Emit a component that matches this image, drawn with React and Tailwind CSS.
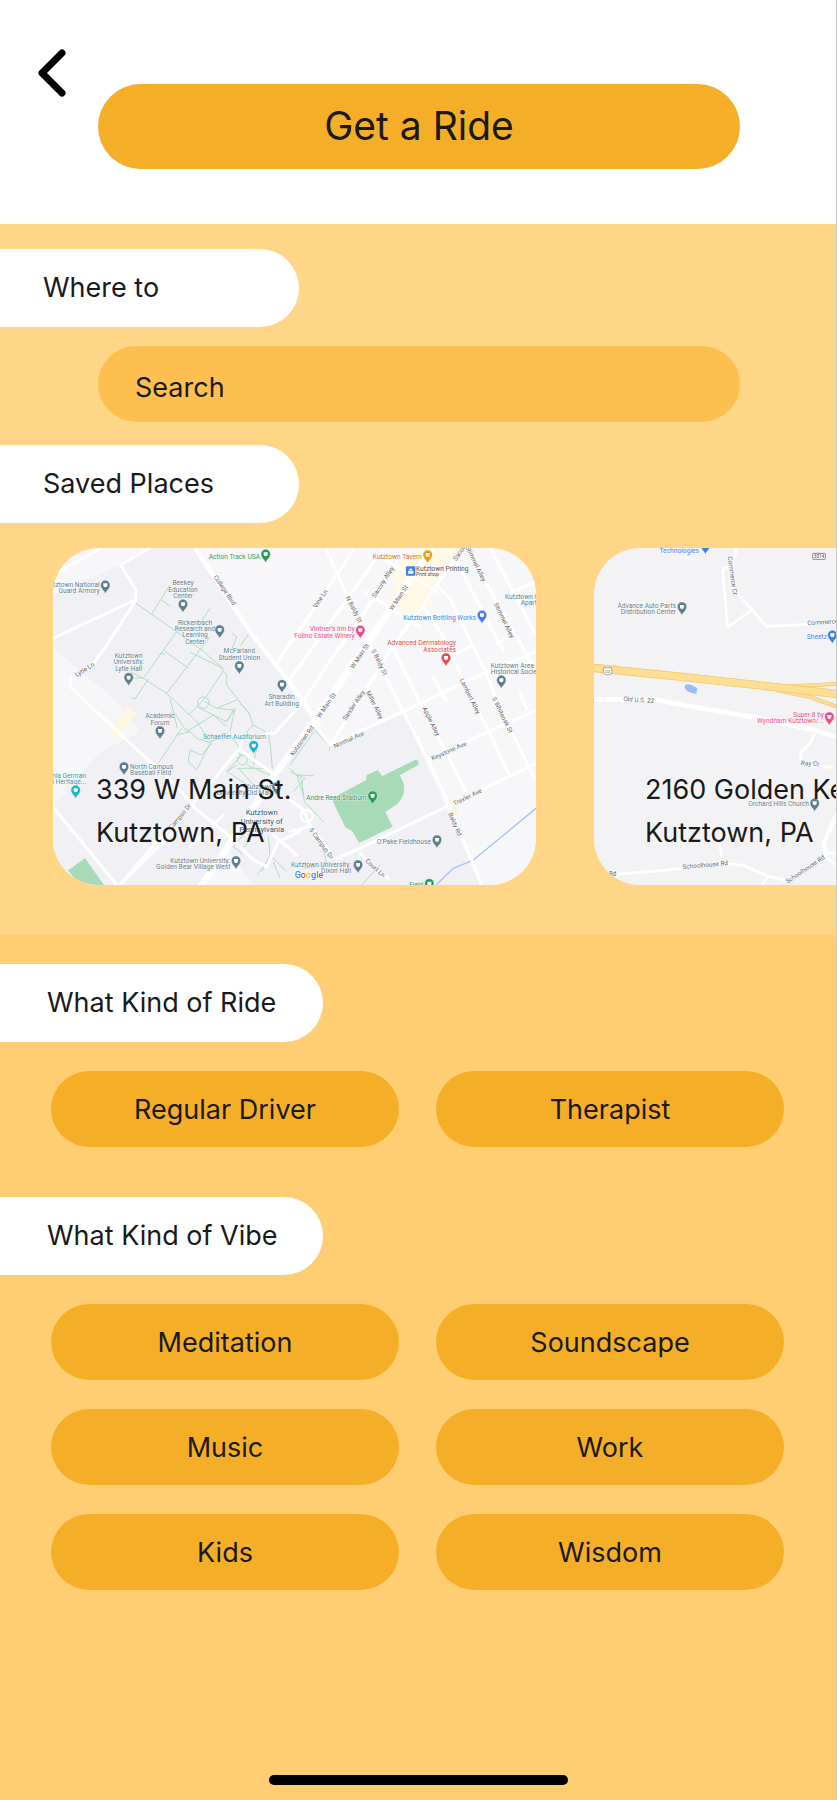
import React, { useState } from 'react';

const PILL = 'h-[76px] rounded-full bg-[#f5ae27] pt-[2px] text-[27px] leading-[34px] text-[#1a1a1a]';

const rideTypes = ['Regular Driver', 'Therapist'];
const vibes = ['Meditation', 'Soundscape', 'Music', 'Work', 'Kids', 'Wisdom'];

const SLATE = '#5f7d8c';
const BLUE = '#3f7ee8';
const PINK = '#e84a86';
const TEAL = '#12b5cb';
const GREEN = '#1e9e54';

// Each label is [x, y, anchor, colour, lines]
const campusLabels = [
    [660, 71, 'end', GREEN, ['Action Track USA']],
    [179, 155, 'end', SLATE, ['Kutztown National', 'Guard Armory']],
    [429, 151, 'middle', SLATE, ['Beekey', 'Education', 'Center']],
    [465, 269, 'middle', SLATE, ['Rickenbach', 'Research and', 'Learning', 'Center']],
    [598, 355, 'middle', SLATE, ['McFarland', 'Student Union']],
    [266, 369, 'middle', SLATE, ['Kutztown', 'University:', 'Lytle Hall']],
    [725, 493, 'middle', SLATE, ['Sharadin', 'Art Building']],
    [360, 550, 'middle', SLATE, ['Academic', 'Forum']],
    [583, 613, 'middle', '#3b9aab', ['Schaeffer Auditorium']],
    [138, 728, 'end', '#3b9aab', ['Pennsylvania German', 'Cultural Heritage...']],
    [270, 701, 'start', SLATE, ['North Campus', 'Baseball Field']],
    [571, 983, 'end', SLATE, ['Kutztown University:', 'Golden Bear Village West']],
    [700, 762, 'end', SLATE, ['Kutztown', 'University Old Main']],
    [1146, 73, 'end', '#d9730d', ['Kutztown Tavern']],
    [1128, 107, 'start', '#4b5158', ['Kutztown Printing']],
    [1308, 254, 'end', BLUE, ['Kutztown Bottling Works']],
    [944, 289, 'end', PINK, ["Vintner's Inn by", 'Folino Estate Winery']],
    [1248, 331, 'end', '#dc4a4a', ['Advanced Dermatology', 'Associates']],
    [1395, 192, 'start', SLATE, ['Kutztown Grand']],
    [1442, 211, 'start', SLATE, ['Apartments']],
    [1352, 399, 'start', SLATE, ['Kutztown Area', 'Historical Society']],
    [980, 794, 'end', '#3c8a5c', ['Andre Reed Stadium']],
    [1173, 927, 'end', SLATE, ["O'Pake Fieldhouse"]],
    [933, 995, 'end', SLATE, ['Kutztown University:', 'Dixon Hall']],
    [1150, 1056, 'end', GREEN, ['Field']],
];

const campusPins = [
    [677, 60, GREEN], [196, 153, SLATE], [429, 210, SLATE], [539, 287, SLATE],
    [598, 395, SLATE], [266, 430, SLATE], [726, 451, SLATE], [360, 590, SLATE],
    [641, 634, TEAL], [107, 768, TEAL], [252, 698, SLATE], [588, 980, SLATE], [710, 758, SLATE],
    [1163, 62, '#f29913'], [1326, 243, BLUE], [961, 288, PINK],
    [1218, 371, '#e2504b'], [1384, 438, SLATE], [998, 785, GREEN], [1191, 917, SLATE],
    [954, 992, SLATE], [1168, 1048, GREEN],
];

// Each street name is [x, y, angle, text]
const campusStreets = [
    [553, 166, 56, 'College Blvd'], [135, 405, -32, 'Lytle Ln'], [421, 845, -50, 'Campus Dr'],
    [842, 192, -56, 'Vine Ln'], [941, 224, 63, 'N Baldy St'], [1030, 142, -57, 'Sacony Alley'],
    [1077, 189, -56, 'W Main St'], [960, 364, -56, 'W Main St'], [860, 512, -56, 'W Main St'],
    [1017, 382, 64, 'S Baldy St'], [1306, 86, 64, 'Stimmel Alley'], [1391, 256, 64, 'Stimmel Alley'],
    [1289, 484, 64, 'Lambert Alley'], [1003, 510, 64, 'Miller Alley'], [942, 512, -56, 'Sander Alley'],
    [1172, 560, 64, 'Apple Alley'], [1386, 540, 64, 'S Whiteoak St'], [787, 618, -54, 'Kutztown Rd'],
    [927, 615, -24, 'Normal Ave'], [1227, 649, -24, 'Keystone Ave'], [1283, 787, -26, 'Trexler Ave'],
    [1244, 868, 66, 'Baldy Rd'], [843, 926, 54, 'S Campus Dr'], [1005, 1000, 42, 'Court Ln'],
    [1262, 50, -56, 'Sacony'],
];

const goldenLabels = [
    [357, 48, 'end', BLUE, ['Technologies']],
    [288, 213, 'end', SLATE, ['Advance Auto Parts', 'Distribution Center']],
    [741, 306, 'end', BLUE, ['Sheetz']],
    [732, 540, 'end', PINK, ['Super 8 by', 'Wyndham Kutztown/...']],
    [687, 808, 'end', SLATE, ['Orchard Hills Church']],
];

const goldenPins = [
    [376, 29, BLUE], [306, 212, SLATE], [757, 297, BLUE], [748, 542, PINK], [704, 801, SLATE],
];

const goldenStreets = [
    [456, 116, 82, 'Commerce Ct'], [740, 256, -4, 'Commerce Ct'], [176, 490, 4, 'Old U.S. 22'],
    [690, 681, 4, 'Ray Ct'], [376, 985, -5, 'Schoolhouse Rd'], [676, 998, -34, 'Schoolhouse Rd'],
    [98, 1013, 0, 'Rd'],
];

const Pin = ({ x, y, color }) => (
    <g transform={`translate(${x} ${y})`}>
        <path d="M0 23C-3 13-14 9-14-3a14 14 0 0 1 28 0C14 9 3 13 0 23Z" fill={color} stroke="#fff" strokeWidth="1" />
        <path d="M-6-8h12v6a6 6 0 0 1-12 0Z" fill="#fff" />
    </g>
);

const MapText = ({ labels, pins, streets }) => (
    <g fontFamily="Roboto, sans-serif">
        {streets.map(([x, y, angle, text]) => (
            <text key={`${x}-${y}`} transform={`translate(${x} ${y}) rotate(${angle})`} textAnchor="middle" dominantBaseline="middle" fontSize="19" fill="#5f6368" stroke="#fff" strokeWidth="2" paintOrder="stroke">
                {text}
            </text>
        ))}
        {labels.map(([x, y, anchor, color, lines]) =>
            lines.map((line, i) => (
                <text key={`${x}-${y}-${i}`} x={x} y={y + i * 19} textAnchor={anchor} fontSize="20" fill={color} stroke="#fff" strokeWidth="2" paintOrder="stroke">
                    {line}
                </text>
            ))
        )}
        {pins.map(([x, y, color]) => (
            <Pin key={`${x}-${y}`} x={x} y={y} color={color} />
        ))}
    </g>
);

const CampusMap = () => (
    <svg viewBox="39 39 1449 1011" preserveAspectRatio="xMidYMid slice" className="absolute inset-0 h-full w-full" aria-hidden="true">
        <rect x="39" y="39" width="1449" height="1011" fill="#f7f7f9" />
        <path d="M39 180 240 90 330 39H465L780 505 870 630 1090 530 1320 1050H640L560 940 470 1050H39V815L180 650 300 590 220 490 39 340Z" fill="#f1f1f5" />
        <path d="M1145 39h110l-95 135 25 15-55 75-90-55 30-70-38-25Z" fill="#fef9e7" />
        <path d="M262 520 290 535 232 612 205 592Z" fill="#fdf7df" />
        <path d="M84 1006 135 970 192 1050H120Z" fill="#a9dab8" />
        <path d="M881 805q-6-12 8-22l90-48v-14l34-16 14 18 100-49q10 0 9 15l-57 32c24 36 14 66-10 88l-33 22 22 44-100 49-22-36-20-11Z" fill="#a9dab8" />
        <path d="M1222 792 1237 788 1258 840 1243 848Z" fill="#fdf3dc" />
        <path d="M1188 1050 1240 1000 1300 975 1488 820" fill="none" stroke="#a3c0f7" strokeWidth="4" />

        {/* footpaths */}
        <g fill="none" stroke="#b2dcc1" strokeWidth="3">
            <path d="M285 203 410 290 485 345 550 400M390 150 335 237M365 195 390 213M510 220 480 265M410 290 310 430 380 475M510 305 380 475M370 345 445 400M360 355 375 358M450 352 540 395 560 420 560 450 595 495 630 540M630 290 600 335M575 295 590 305 575 345M552 405 495 490 445 540M310 430 270 410M325 432 285 492 274 487M390 490 412 580M270 430 310 428M380 475 470 560 510 620" />
            <circle cx="490" cy="503" r="17" />
            <path d="M495 500 530 520 580 525 560 560 500 530 470 515M530 520 590 495M560 560 585 520 570 590M405 535 440 590 520 540 560 575M425 580 355 685M440 580 470 610 515 625 485 660 450 645 445 680 470 705 510 625M450 590 410 600M510 620 570 600 600 640M590 650 610 665M595 700 650 760M600 505 625 530 640 570 620 590 650 640 640 690M640 570 685 595 692 640 697 700M605 660 560 710 640 760" />
            <circle cx="607" cy="675" r="15" />
            <path d="M590 700 680 700 710 725 650 800M620 690 690 720M560 710 590 690M640 870 625 920 605 945M685 905 690 960 665 1010M690 960 740 1010M610 900 580 935 608 958M685 975 650 1020M700 980 720 1030M825 585 870 635 868 648M823 588 750 690M750 700 785 735 790 780 770 720 820 722M750 710 795 730 760 770M785 735 793 800 850 860M848 935 860 985M1020 990 965 1050M790 1000 860 990" />
        </g>

        {/* streets */}
        <g fill="none" stroke="#fff" strokeWidth="9" strokeLinejoin="round" strokeLinecap="round">
            <path d="M39 120 185 39M39 310 285 195M330 39 242 90 288 165 285 200 200 330 150 400 98 425Q85 440 95 460L180 540 340 690 430 775 465 820 570 905 640 975 680 995 715 920 780 890" />
            <path d="M39 815 230 1050M240 1050 350 920 455 810 600 640 612 600M600 645 705 720M680 595 705 595 785 505M530 1000 570 930M450 935 550 840M240 1050 410 880M700 900 770 960" />
            <path d="M710 385 890 120 940 45M745 440 1030 40M785 505 865 385 975 230 1090 50M860 45 930 200 985 320 1090 530 1165 675 1230 815 1325 1050M1060 340 1150 525 1210 635 1280 775M1150 212 1200 290 1240 370 1310 520 1350 595 1405 715M1190 150 1230 190 1335 410 1390 540 1488 740M1230 50 1270 120 1375 320 1390 345M1280 39 1450 340 1488 410M1350 39 1488 300M980 460 1030 560M1180 425 1220 500M1440 475 1460 520" />
            <path d="M870 630 980 460 1060 330 1150 212 1190 150 1270 39M825 570 870 630 1090 530 1335 413 1488 350M1165 675 1280 620 1488 525M890 970 960 940 1230 810 1488 685M1220 370 1290 335M1370 325 1420 300M1430 165 1488 140M975 170 1140 275M1030 70 1190 170M750 795 790 825 810 870 880 965 905 970M750 890 810 875M960 955 1045 1030" />
            <circle cx="800" cy="843" r="18" strokeWidth="6" />
        </g>
        <path d="M465 39 630 290 750 445 825 550 840 575" fill="none" stroke="#fff" strokeWidth="13" />
        <path d="M480 1060 570 925 700 725 825 555 985 320 1175 39" fill="none" stroke="#fff" strokeWidth="20" />

        <MapText labels={campusLabels} pins={campusPins} streets={campusStreets} />
        <rect x="1098" y="94" width="28" height="28" rx="3" fill={BLUE} />
        <path d="M1104 107h16v9h-16Zm4-1v-5h8v5" fill="#fff" />
        <g fontFamily="Roboto, sans-serif" textAnchor="middle">
            <text x="1128" y="123" textAnchor="start" fontSize="15" fill="#4b5158">Print shop</text>
            <g fontSize="23" fill="#1d5b70" stroke="#fff" strokeWidth="2" paintOrder="stroke">
                <text x="665" y="840">Kutztown</text>
                <text x="665" y="866">University of</text>
                <text x="665" y="892">Pennsylvania</text>
            </g>
            <text x="807" y="1030" fontSize="27" fontWeight="500" stroke="#fff" strokeWidth="3" paintOrder="stroke">
                <tspan fill="#4285f4">G</tspan>
                <tspan fill="#ea4335">o</tspan>
                <tspan fill="#fbbc05">o</tspan>
                <tspan fill="#4285f4">g</tspan>
                <tspan fill="#34a853">l</tspan>
                <tspan fill="#ea4335">e</tspan>
            </text>
        </g>
    </svg>
);

const GoldenMap = () => (
    <svg viewBox="42 33 1449 1011" preserveAspectRatio="xMidYMid slice" className="absolute inset-0 h-full w-full" aria-hidden="true">
        <rect x="42" y="33" width="1449" height="1011" fill="#f3f3f5" />
        <g fill="none" stroke="#fff" strokeWidth="8" strokeLinejoin="round">
            <path d="M470 33 455 100 460 155 560 268 690 262 800 252M455 90 432 92 428 105 443 270 515 220" />
            <path d="M42 487H220L400 520 560 548 700 578 800 610" strokeWidth="14" />
            <path d="M703 592 690 620Q650 650 665 670L700 685 760 692M105 1012 250 1000 430 978 490 985 565 1018 620 1030 680 990 735 958 800 1010M430 978 418 920M565 1018 545 1044" />
            <path d="M800 770 730 920 740 955M730 948H800" strokeWidth="12" />
        </g>
        <g fill="none">
            <path d="M590 450 800 439M590 460 690 480 800 520" stroke="#f3c66e" strokeWidth="12" />
            <path d="M590 450 800 439M590 460 690 480 800 520" stroke="#fddf93" strokeWidth="8" />
            <path d="M42 393 300 419 600 452 800 474" stroke="#f3c66e" strokeWidth="25" />
            <path d="M42 393 300 419 600 452 800 474" stroke="#fddf93" strokeWidth="20" />
        </g>
        <path d="M314 446q10-7 20-3l18 11-3 17q-30-4-35-18Z" fill="#9bbcfb" />
        <path d="M72 391q11 4 22 0 4 12 0 20-11 5-22 0-4-10 0-20Z" fill="#fff" stroke="#888" strokeWidth="2" />
        <rect x="698" y="49" width="38" height="18" rx="2" fill="#fff" stroke="#555" strokeWidth="2" />
        <g fontFamily="Roboto, sans-serif" textAnchor="middle" fill="#444">
            <text x="83" y="407" fontSize="13">22</text>
            <text x="717" y="63" fontSize="14">3014</text>
        </g>
        <MapText labels={goldenLabels} pins={goldenPins} streets={goldenStreets} />
    </svg>
);

const places = [
    { street: '339 W Main St.', city: 'Kutztown, PA', Map: CampusMap, pad: 'pl-[43px]' },
    { street: '2160 Golden Key Rd', city: 'Kutztown, PA', Map: GoldenMap, pad: 'pl-[51px]' },
];

const SectionLabel = ({ as: Tag = 'h2', wide, children, ...rest }) => (
    <Tag
        className={`flex h-[78px] items-center rounded-r-full bg-white text-[27px] leading-[34px] ${wide ? 'w-[323px] pl-[47px]' : 'w-[299px] pl-[43px]'}`}
        {...rest}
    >
        {children}
    </Tag>
);

const Options = ({ items, selected, onSelect }) => (
    <div className="grid grid-cols-2 gap-x-[37px] gap-y-[29px] pt-[29px] pr-[52px] pl-[51px]">
        {items.map((item) => (
            <button key={item} type="button" aria-pressed={selected === item} onClick={() => onSelect(item)} className={PILL}>
                {item}
            </button>
        ))}
    </div>
);

const App = () => {
    const [search, setSearch] = useState('');
    const [ride, setRide] = useState(null);
    const [vibe, setVibe] = useState(null);

    return (
        <div className="flex min-h-screen flex-col border-r border-[#c9c9c9] bg-[#ffce73] font-['Inter',sans-serif] text-[#1a1a1a]">
            <header className="relative bg-white pt-[84px] pr-24 pb-[55px] pl-[98px]">
                <button type="button" aria-label="Back" className="absolute top-[48px] left-[36px]">
                    <svg width="32" height="50" viewBox="0 0 32 50" fill="none" stroke="#000" strokeWidth="7" strokeLinecap="round" strokeLinejoin="round">
                        <path d="M26 5 6 25l20 20" />
                    </svg>
                </button>
                <h1 className="flex h-[85px] items-center justify-center rounded-full bg-[#f5ae27] text-[39px]">
                    Get a Ride
                </h1>
            </header>

            <section className="bg-[#ffd588] pt-[25px] pb-[50px]">
                <SectionLabel as="label" htmlFor="search">Where to</SectionLabel>
                <div className="pt-[19px] pr-24 pb-[23px] pl-[98px]">
                    <input
                        id="search"
                        type="text"
                        placeholder="Search"
                        value={search}
                        onChange={(e) => setSearch(e.target.value)}
                        className="h-[76px] w-full rounded-full bg-[#fdbf50] px-[37px] pt-[6px] text-[27px] outline-none placeholder:text-[#1a1a1a]"
                    />
                </div>
                <SectionLabel>Saved Places</SectionLabel>
                <div className="flex gap-[58px] overflow-x-auto pt-[25px] pl-[53px] [scrollbar-width:none]">
                    {places.map(({ street, city, Map, pad }) => (
                        <a key={street} href="#ride" className={`relative flex h-[337px] w-[483px] shrink-0 items-end overflow-hidden rounded-[46px] pb-[31px] ${pad}`}>
                            <Map />
                            <span className="relative text-[27px] leading-[43px] whitespace-nowrap">
                                {street}
                                <br />
                                {city}
                            </span>
                        </a>
                    ))}
                </div>
            </section>

            <main id="ride" className="flex-1 pt-[29px]">
                <SectionLabel wide>What Kind of Ride</SectionLabel>
                <Options items={rideTypes} selected={ride} onSelect={setRide} />
                <div className="pt-[50px]">
                    <SectionLabel wide>What Kind of Vibe</SectionLabel>
                    <Options items={vibes} selected={vibe} onSelect={setVibe} />
                </div>
            </main>

            <footer className="flex justify-center pt-10 pb-[15px]">
                <div className="h-[10px] w-[299px] rounded-full bg-black" />
            </footer>
        </div>
    );
};

export default App;
